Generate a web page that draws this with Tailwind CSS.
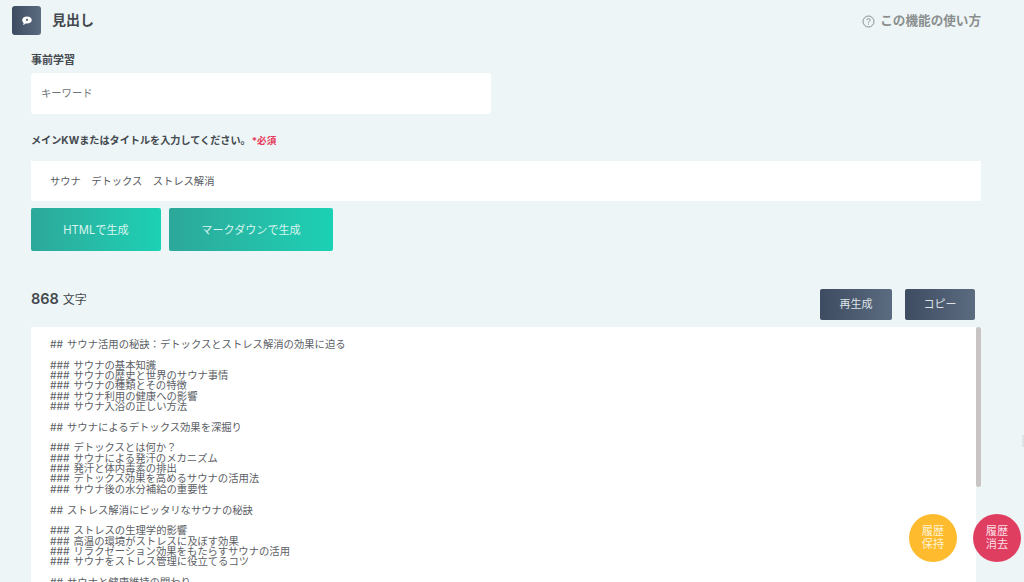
<!DOCTYPE html>
<html lang="ja">
<head>
<meta charset="utf-8">
<script src="https://cdn.jsdelivr.net/npm/@tailwindcss/browser@4"></script>
</head>
<body class="h-[582px] w-[1024px] overflow-hidden bg-[#edf5f6] text-[#4a4f55] font-['Inter','Noto_Sans_CJK_JP',sans-serif]">
<div class="relative h-[582px] overflow-hidden">
  <header class="flex h-[41px] items-start pl-[12px] pr-[43px] pt-[6px]">
    <div class="flex h-[29px] w-[29px] items-center justify-center rounded-[3px] bg-gradient-to-r from-[#3e4c61] to-[#5b6b80]">
      <svg width="12" height="10" viewBox="0 0 12 10"><path d="M6 0.5C8.9 0.5 10.8 2 10.8 4.1C10.8 6.2 8.9 7.6 6 7.6C5.5 7.6 5 7.6 4.6 7.5C3.9 8.4 2.9 8.9 1.8 9C2.4 8.3 2.7 7.6 2.6 6.9C1.6 6.3 1.2 5.3 1.2 4.1C1.2 2 3.1 0.5 6 0.5Z" fill="#fff"/><circle cx="6" cy="3.8" r="1.1" fill="#4c5b70"/></svg>
    </div>
    <h1 class="ml-[11px] text-[14px] leading-[28px] font-bold text-[#44494f]">見出し</h1>
    <a class="ml-auto flex items-center gap-[5px] pt-[1px] text-[12.6px] leading-[28px] font-bold text-[#8a8e8f]">
      <svg width="13" height="13" viewBox="0 0 13 13" fill="none" stroke="#8a8e8f" stroke-width="1"><circle cx="6.5" cy="6.5" r="5.5"/><path d="M4.8 5.2C4.8 4.2 5.5 3.6 6.5 3.6C7.5 3.6 8.2 4.2 8.2 5.1C8.2 6.2 6.5 6.2 6.5 7.6M6.5 8.6V9.6"/></svg>
      この機能の使い方
    </a>
  </header>

  <main class="pl-[31px] pr-[43px]">
    <label class="block text-[11px] leading-[18px] font-bold text-[#44494f] mt-[10px]">事前学習</label>
    <div class="mt-[4px] flex h-[41px] w-[460px] items-center rounded-[3px] bg-white pl-[10px] pt-[1px] text-[10.3px] text-[#71757a]">キーワード</div>

    <div class="mt-[18px] text-[10.15px] leading-[16px] font-bold text-[#44494f]">メインKWまたはタイトルを入力してください。<span class="ml-[1px] text-[9.6px] text-[#e83e5f]">*必須</span></div>

    <div class="mt-[12px] flex h-[40px] items-center bg-white pl-[19px] pt-[1px] text-[10.3px] text-[#55595e]">サウナ　デトックス　ストレス解消</div>

    <div class="mt-[7px] flex gap-[8px]">
      <button class="h-[43px] w-[130px] rounded-[2px] bg-gradient-to-r from-[#2ca89a] to-[#1bd1b4] pt-[1px] text-[11.2px] text-[#d9f5ef]">HTMLで生成</button>
      <button class="h-[43px] w-[164px] rounded-[2px] bg-gradient-to-r from-[#2ca89a] to-[#1bd1b4] pt-[1px] text-[11.1px] text-[#d9f5ef]">マークダウンで生成</button>
    </div>

    <div class="mt-[38px] flex h-[31px] items-start pr-[6px]">
      <div class="flex items-baseline gap-[4px] text-[#44494f]"><span class="text-[14.5px] leading-[20px] font-semibold">868</span><span class="text-[12px]">文字</span></div>
      <div class="ml-auto flex gap-[13px]">
        <button class="h-[31px] w-[72px] rounded-[2px] bg-gradient-to-r from-[#3e4c61] to-[#5b6b80] text-[11px] text-[#dfe3e8]">再生成</button>
        <button class="h-[31px] w-[70px] rounded-[2px] bg-gradient-to-r from-[#3e4c61] to-[#5b6b80] text-[11px] text-[#dfe3e8]">コピー</button>
      </div>
    </div>

    <div class="relative mt-[7px] h-[400px] w-[945px] bg-white pl-[19px] pt-[12px]">
      <pre class="text-[10.33px] leading-[10.35px] text-[#5c6065] [word-spacing:1px] font-['Inter','Noto_Sans_CJK_JP',sans-serif]">## サウナ活用の秘訣：デトックスとストレス解消の効果に迫る

### サウナの基本知識
### サウナの歴史と世界のサウナ事情
### サウナの種類とその特徴
### サウナ利用の健康への影響
### サウナ入浴の正しい方法

## サウナによるデトックス効果を深掘り

### デトックスとは何か？
### サウナによる発汗のメカニズム
### 発汗と体内毒素の排出
### デトックス効果を高めるサウナの活用法
### サウナ後の水分補給の重要性

## ストレス解消にピッタリなサウナの秘訣

### ストレスの生理学的影響
### 高温の環境がストレスに及ぼす効果
### リラクゼーション効果をもたらすサウナの活用
### サウナをストレス管理に役立てるコツ

## サウナと健康維持の関わり</pre>
      <div class="absolute left-full top-0 h-[160px] w-[5px] rounded-full bg-[#c8c4c4]"></div>
    </div>
  </main>

  <div class="absolute left-[1022px] top-[435px] h-[12px] w-[2px] bg-[#dfe5e5]"></div>
  <div class="absolute left-[909px] top-[514px] flex h-[48px] w-[48px] items-center justify-center rounded-full bg-[#fdbb2d] text-center text-[11.2px] leading-[13px] text-[#fff3d6]">履歴<br>保持</div>
  <div class="absolute left-[973px] top-[514px] flex h-[48px] w-[48px] items-center justify-center rounded-full bg-[#e03e60] text-center text-[11.2px] leading-[13px] text-[#fbdfe5]">履歴<br>消去</div>
</div>
</body>
</html>
